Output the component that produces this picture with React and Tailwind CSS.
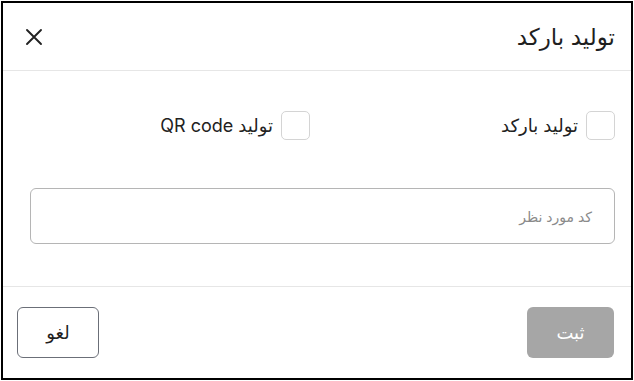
import React from "react";

export default function App() {
  return (
    <div className="w-[634px] h-[381px] bg-white p-px" style={{ fontFamily: '"Inter", "DejaVu Sans", sans-serif' }}>
      <div dir="rtl" className="w-[632px] h-[379px] border-2 border-black flex flex-col">
        {/* Header */}
        <div className="h-[68px] flex items-center justify-between pr-[16px] pl-[19px] border-b border-[#e6e6e6] shrink-0">
          <h2 className="text-[23px] text-[#1f1f1f] leading-none pt-[1px]">تولید بارکد</h2>
          <button className="w-[24px] h-[24px] flex items-center justify-center text-[#222]">
            <svg width="20" height="20" viewBox="0 0 20 20" fill="none" stroke="currentColor" strokeWidth="1.9" strokeLinecap="round">
              <path d="M3 3L17 17M17 3L3 17" />
            </svg>
          </button>
        </div>
        {/* Body */}
        <div className="flex-1 flex flex-col px-[16px] pt-[40px]">
          <div className="grid grid-cols-2 gap-x-[14px]">
            <label className="flex items-center gap-[8px]">
              <span className="w-[29px] h-[29px] rounded-[5px] border border-[#d4d4d4] bg-white shrink-0" />
              <span className="text-[18px] text-[#222]">تولید بارکد</span>
            </label>
            <label className="flex items-center gap-[8px]">
              <span className="w-[29px] h-[29px] rounded-[5px] border border-[#d4d4d4] bg-white shrink-0" />
              <span className="text-[18px] text-[#222]">تولید QR code</span>
            </label>
          </div>
          <div className="mt-[48px] ml-[11px] h-[56px] rounded-[6px] border border-[#b5b5b5] flex items-center pr-[22px]">
            <span className="text-[14px] text-[#8a8a8a]">کد مورد نظر</span>
          </div>
        </div>
        {/* Footer */}
        <div className="h-[92px] border-t border-[#e6e6e6] flex items-center justify-between pr-[17px] pl-[14px] shrink-0">
          <button className="w-[87px] h-[51px] rounded-[6px] bg-[#a6a6a6] text-white text-[18px] font-medium">ثبت</button>
          <button className="w-[82px] h-[51px] rounded-[6px] border border-[#6b6f78] bg-white text-[#1f1f1f] text-[18px] font-medium">لغو</button>
        </div>
      </div>
    </div>
  );
}
